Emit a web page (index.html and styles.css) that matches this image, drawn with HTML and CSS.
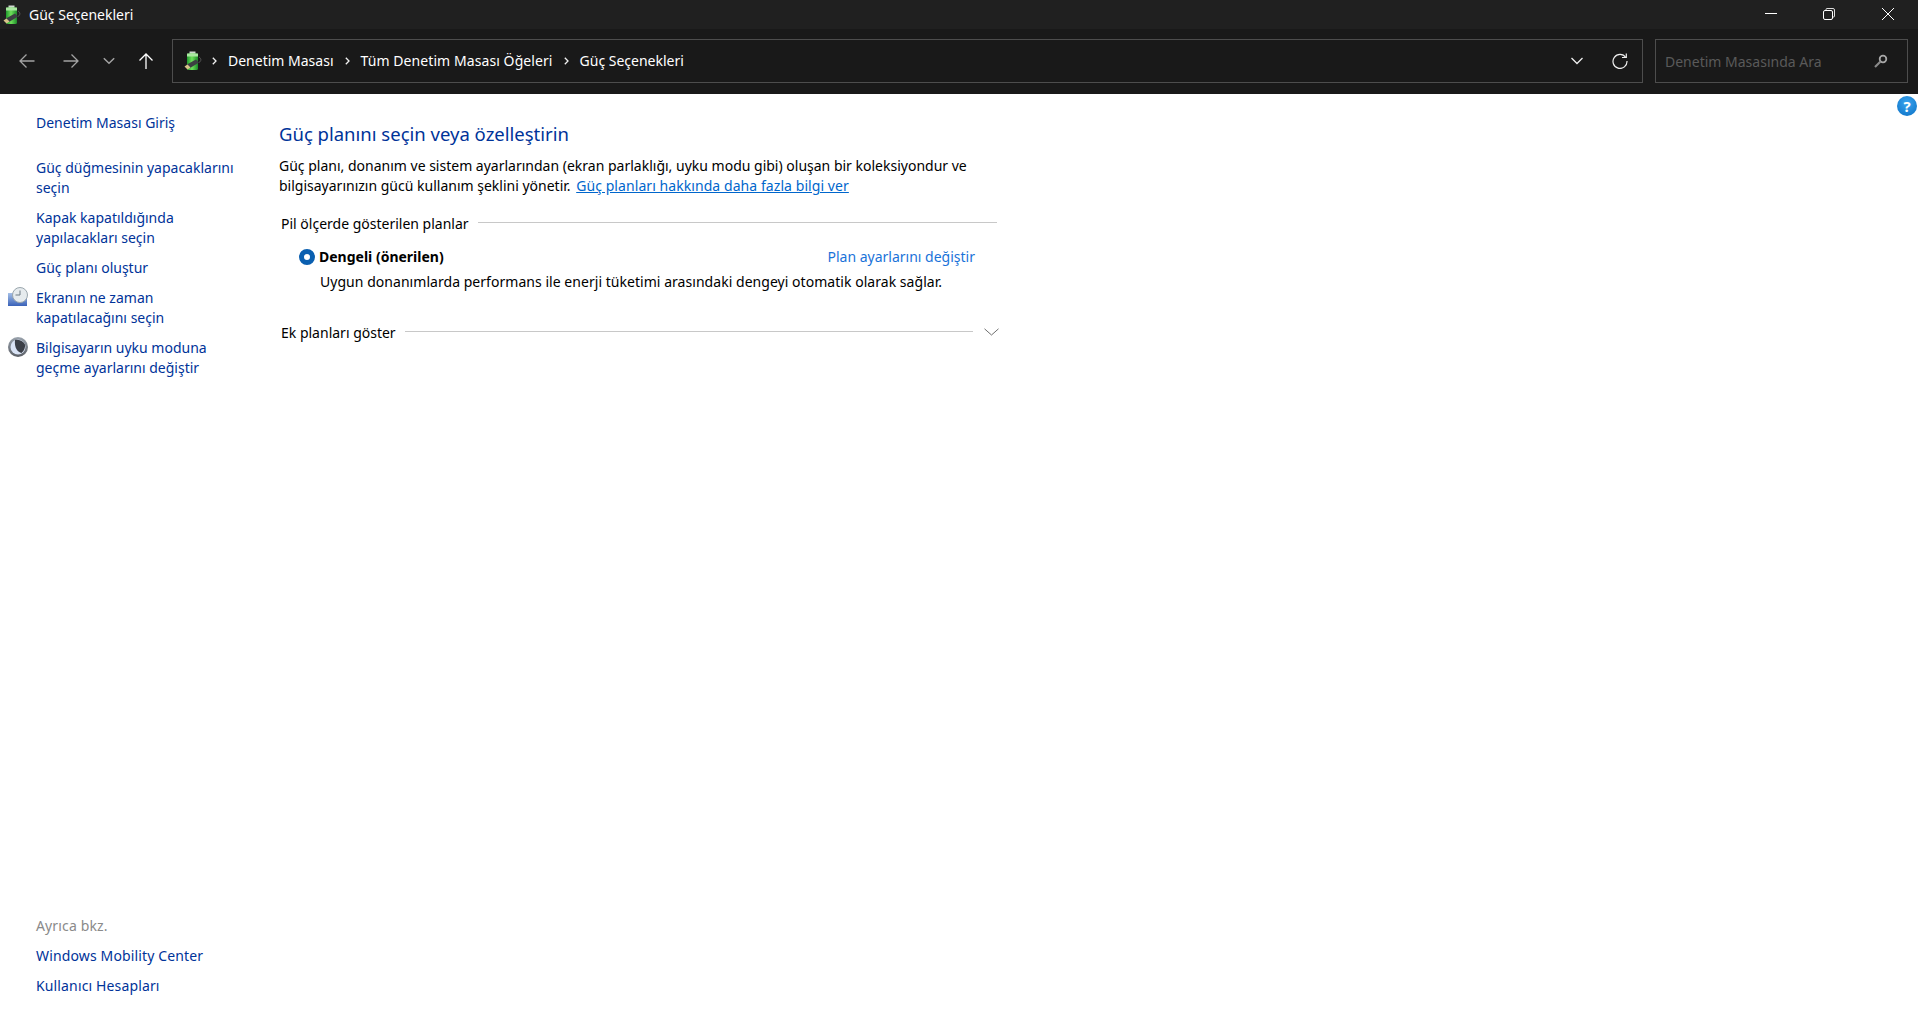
FILE: index.html
```html
<!DOCTYPE html>
<html lang="tr">
<head>
  <meta charset="UTF-8">
  <title>Güç Seçenekleri</title>
  <link rel="stylesheet" href="styles.css">
</head>
<body>
  <svg class="defs" width="0" height="0">
    <defs>
      <linearGradient id="battGreen" x1="0" y1="0" x2="1" y2="0">
        <stop offset="0" stop-color="#1f9a2e"/>
        <stop offset="0.45" stop-color="#6fe05a"/>
        <stop offset="1" stop-color="#1c8a2a"/>
      </linearGradient>
      <symbol id="battery" viewBox="0 0 18 20">
        <rect x="5.5" y="0.5" width="6" height="2.5" fill="#cfd8cf"/>
        <rect x="3" y="2.5" width="11" height="16.5" rx="1.5" fill="url(#battGreen)"/>
        <rect x="3" y="2.5" width="11" height="3" fill="#a9e8a0"/>
        <path d="M15 6c2.5 1.5 2.5 4 0 5.5" fill="none" stroke="#555" stroke-width="1"/>
        <path d="M2 14l10-5.500 3 3-9 5.500z" fill="#3c3f42"/>
        <path d="M0.5 15.500l3-2 3 3-3 2z" fill="#d8c48a"/>
      </symbol>
      <symbol id="crumbArrow" viewBox="0 0 5 8">
        <path d="M.8.8L4 4 .8 7.200" fill="none" stroke="#f2f2f2" stroke-width="1.300"/>
      </symbol>
    </defs>
  </svg>

  <header class="titleBar">
    <div class="titleLeft">
      <svg class="titleIcon"><use href="#battery"/></svg>
      <span>Güç Seçenekleri</span>
    </div>
    <div class="windowButtons">
      <svg class="winBtn" viewBox="0 0 12 12"><path d="M0 5.5h12" stroke="#fff" fill="none"/></svg>
      <svg class="winBtn" viewBox="0 0 12 12"><path d="M3 2V1.500A1 1 0 0 1 4 .5h6A1.500 1.500 0 0 1 11.500 2v6a1 1 0 0 1-1 1H10" stroke="#ddd" fill="none"/><rect x="0.5" y="2.500" width="9" height="9" rx="1.500" stroke="#fff" fill="none"/></svg>
      <svg class="winBtn" viewBox="0 0 12 12"><path d="M0 0l12 12M12 0L0 12" stroke="#fff" fill="none"/></svg>
    </div>
  </header>

  <nav class="navBar">
    <div class="navButtons">
      <svg class="navBtn" viewBox="0 0 16 16"><path d="M15.500 8H1M7.500 1.500L1 8l6.500 6.500" stroke="#a3a3a3" stroke-width="1.300" fill="none"/></svg>
      <svg class="navBtn" viewBox="0 0 16 16"><path d="M.5 8H15M8.500 1.500L15 8l-6.500 6.500" stroke="#a3a3a3" stroke-width="1.300" fill="none"/></svg>
      <svg class="navDown" viewBox="0 0 12 8"><path d="M.8 1.200L6 6.200l5.200-5" stroke="#a3a3a3" stroke-width="1.500" fill="none"/></svg>
      <svg class="navBtn" viewBox="0 0 16 16"><path d="M8 16V1M1.500 7.500L8 1l6.500 6.500" stroke="#fff" stroke-width="1.300" fill="none"/></svg>
    </div>
    <div class="addressBox">
      <svg class="addressIcon"><use href="#battery"/></svg>
      <svg class="crumbSep firstSep"><use href="#crumbArrow"/></svg>
      <span class="crumb">Denetim Masası</span>
      <svg class="crumbSep"><use href="#crumbArrow"/></svg>
      <span class="crumb wideCrumb">Tüm Denetim Masası Öğeleri</span>
      <svg class="crumbSep"><use href="#crumbArrow"/></svg>
      <span class="crumb">Güç Seçenekleri</span>
      <svg class="addressDown" viewBox="0 0 12 8"><path d="M.5 1L6 6.500 11.500 1" stroke="#eee" stroke-width="1.300" fill="none"/></svg>
      <svg class="refresh" viewBox="0 0 16 16"><path d="M13.800 4.500A7 7 0 1 0 15 8" stroke="#eee" stroke-width="1.200" fill="none"/><path d="M10 4.500h4.300V.5" stroke="#eee" stroke-width="1.200" fill="none"/></svg>
    </div>
    <div class="searchBox">
      <span class="searchText">Denetim Masasında Ara</span>
      <svg class="searchIcon" viewBox="0 0 14 14"><circle cx="9" cy="5" r="3.300" stroke="#a8a8a8" stroke-width="1.800" fill="none"/><path d="M6.500 7.500L1 13" stroke="#8a8a8a" stroke-width="2.200"/></svg>
    </div>
  </nav>

  <div class="page">
    <aside class="sidebar">
      <div class="sideTop">
        <a class="sideLink homeLink">Denetim Masası Giriş</a>
        <a class="sideLink">Güç düğmesinin yapacaklarını<br>seçin</a>
        <a class="sideLink">Kapak kapatıldığında<br>yapılacakları seçin</a>
        <a class="sideLink">Güç planı oluştur</a>
        <a class="sideLink withIcon">
          <svg class="sideIcon" viewBox="0 0 20 20">
            <defs><linearGradient id="screenBlue" x1="0" y1="0" x2="0" y2="1"><stop offset="0" stop-color="#a5c0e8"/><stop offset="1" stop-color="#3a62b8"/></linearGradient></defs>
            <rect x="0" y="6" width="19" height="13" fill="url(#screenBlue)"/>
            <circle cx="12" cy="8" r="7.500" fill="#e6ebee" stroke="#9aa6ad"/>
            <path d="M12 3.500V8H7.500" stroke="#6d7a84" fill="none"/>
          </svg>
          Ekranın ne zaman<br>kapatılacağını seçin
        </a>
        <a class="sideLink withIcon">
          <svg class="sideIcon" viewBox="0 0 20 20">
            <defs><linearGradient id="rimGrey" x1="0" y1="0" x2="0" y2="1"><stop offset="0" stop-color="#9aa3ad"/><stop offset="1" stop-color="#5b5f66"/></linearGradient></defs>
            <circle cx="10" cy="10" r="10" fill="url(#rimGrey)"/>
            <circle cx="10" cy="10" r="7.500" fill="#d9e3f5"/>
            <path d="M7 2.900c3-.6 8 .6 10 4.600.5 3-1 6.500-3.500 8.500-3.500-1-7.500-5-6.500-13.100z" fill="#3b3f47"/>
          </svg>
          Bilgisayarın uyku moduna<br>geçme ayarlarını değiştir
        </a>
      </div>
      <div class="sideBottom">
        <div class="seeAlso">Ayrıca bkz.</div>
        <a class="sideLink">Windows Mobility Center</a>
        <a class="sideLink">Kullanıcı Hesapları</a>
      </div>
    </aside>

    <main class="content">
      <h1 class="pageTitle">Güç planını seçin veya özelleştirin</h1>
      <p class="intro">Güç planı, donanım ve sistem ayarlarından (ekran parlaklığı, uyku modu gibi) oluşan bir koleksiyondur ve<br>bilgisayarınızın gücü kullanım şeklini yönetir. <a class="learnMore">Güç planları hakkında daha fazla bilgi ver</a></p>

      <div class="groupHead">
        <span>Pil ölçerde gösterilen planlar</span>
        <div class="rule"></div>
      </div>
      <div class="planRow">
        <div class="planLabel"><span class="radio"></span><b>Dengeli (önerilen)</b></div>
        <a class="planLink">Plan ayarlarını değiştir</a>
      </div>
      <div class="planDesc">Uygun donanımlarda performans ile enerji tüketimi arasındaki dengeyi otomatik olarak sağlar.</div>

      <div class="groupHead moreHead">
        <span>Ek planları göster</span>
        <div class="rule"></div>
        <svg class="moreIcon" viewBox="0 0 15 8"><path d="M.5.8L7.500 7l7-6.200" stroke="#6e6e6e" fill="none"/></svg>
      </div>
    </main>

    <div class="helpBtn">?</div>
  </div>
</body>
</html>
```

FILE: styles.css
```css
* {
  box-sizing: border-box;
}

html, body {
  height: 100%;
}

body {
  margin: 0;
  font-family: "Noto Sans", sans-serif;
  font-size: 14px;
  line-height: 20px;
  color: #000;
  background: #fff;
  display: flex;
  flex-direction: column;
  overflow: hidden;
}

.defs {
  position: absolute;
}

/* Title bar */
.titleBar {
  height: 29px;
  background: #202020;
  color: #fff;
  display: flex;
  align-items: center;
  justify-content: space-between;
  flex-shrink: 0;
}

.titleLeft {
  display: flex;
  align-items: center;
  padding-left: 3px;
  gap: 8px;
}

.titleIcon {
  width: 18px;
  height: 20px;
}

.windowButtons {
  display: flex;
  gap: 46px;
  padding-right: 24px;
  margin-top: -1px;
}

.winBtn {
  width: 12px;
  height: 12px;
}

.winBtn:last-child {
  margin-left: 1px;
}

/* Address row */
.navBar {
  height: 65px;
  background: #191919;
  display: flex;
  align-items: flex-start;
  padding: 10px 10px 0 0;
  flex-shrink: 0;
}

.navButtons {
  width: 172px;
  height: 44px;
  display: flex;
  align-items: center;
  padding-left: 19px;
  flex-shrink: 0;
}

.navBtn {
  width: 16px;
  height: 16px;
}

.navBtn:nth-child(2) {
  margin-left: 28px;
}

.navBtn:nth-child(4) {
  margin-left: 23px;
}

.navDown {
  width: 12px;
  height: 8px;
  margin-left: 24px;
}

.addressBox,
.searchBox {
  height: 44px;
  border: 1px solid #4d4d4d;
  display: flex;
  align-items: center;
}

.addressBox {
  width: 1471px;
  color: #fff;
  padding-left: 11px;
}

.addressIcon {
  width: 18px;
  height: 20px;
}

.crumbSep {
  width: 5px;
  height: 8px;
  margin: 0 11px;
  flex-shrink: 0;
}

.firstSep {
  margin-left: 10px;
}

.wideCrumb {
  letter-spacing: 0.08px;
}

.addressDown {
  width: 12px;
  height: 8px;
  margin-left: auto;
}

.refresh {
  width: 16px;
  height: 16px;
  margin: 0 14px 0 29px;
}

.searchBox {
  width: 253px;
  margin-left: 12px;
  padding: 0 19px 0 9px;
  color: #5a5a5a;
  justify-content: space-between;
}

.searchText {
  padding-top: 2px;
}

.searchIcon {
  width: 14px;
  height: 14px;
}

/* Page */
.page {
  flex: 1;
  display: flex;
  position: relative;
  min-height: 0;
}

.sidebar {
  width: 279px;
  padding: 19px 0 20px 36px;
  display: flex;
  flex-direction: column;
  justify-content: space-between;
  flex-shrink: 0;
}

.sideLink {
  display: block;
  color: #003399;
  margin-bottom: 10px;
  position: relative;
}

.homeLink {
  margin-bottom: 25px;
}

.sideIcon {
  position: absolute;
  left: -28px;
  top: -1px;
  width: 20px;
  height: 20px;
}

.sideBottom {
  letter-spacing: 0.14px;
}

.sideBottom .sideLink:last-child {
  margin-bottom: 0;
}

.seeAlso {
  color: #8a8a8a;
  margin-bottom: 10px;
}

.content {
  padding-top: 28px;
  width: 718px;
}

.pageTitle {
  margin: 0 0 10px;
  font-size: 18.500px;
  font-weight: 400;
  line-height: 24px;
  color: #003399;
}

.intro {
  margin: 0 0 18px;
}

.learnMore {
  margin-left: 2px;
  color: #0066cc;
  text-decoration: underline;
  letter-spacing: 0.07px;
}

.groupHead {
  display: flex;
  align-items: center;
  padding-left: 2px;
  height: 20px;
}

.rule {
  flex: 1;
  height: 1px;
  background: #c8c8c8;
  margin: -3px 0 0 9px;
}

.planRow {
  display: flex;
  justify-content: space-between;
  padding: 13px 22px 0 20px;
}

.planLabel {
  display: flex;
  align-items: center;
  gap: 4px;
}

.radio {
  width: 16px;
  height: 16px;
  border-radius: 50%;
  border: 5px solid #0a5fb0;
  background: #fff;
  flex-shrink: 0;
}

.planLink {
  color: #1a73d9;
}

.planDesc {
  padding: 5px 0 0 41px;
  letter-spacing: 0.04px;
}

.moreHead {
  margin-top: 31px;
}

.moreIcon {
  width: 15px;
  height: 8px;
  margin: -2px -2px 0 11px;
}

.helpBtn {
  position: absolute;
  right: 1px;
  top: 2px;
  width: 20px;
  height: 20px;
  border-radius: 50%;
  background: radial-gradient(circle at 50% 35%, #3ba5ef, #0a6fc4);
  color: #fff;
  font-weight: 700;
  font-size: 15px;
  line-height: 20px;
  text-align: center;
}
```
